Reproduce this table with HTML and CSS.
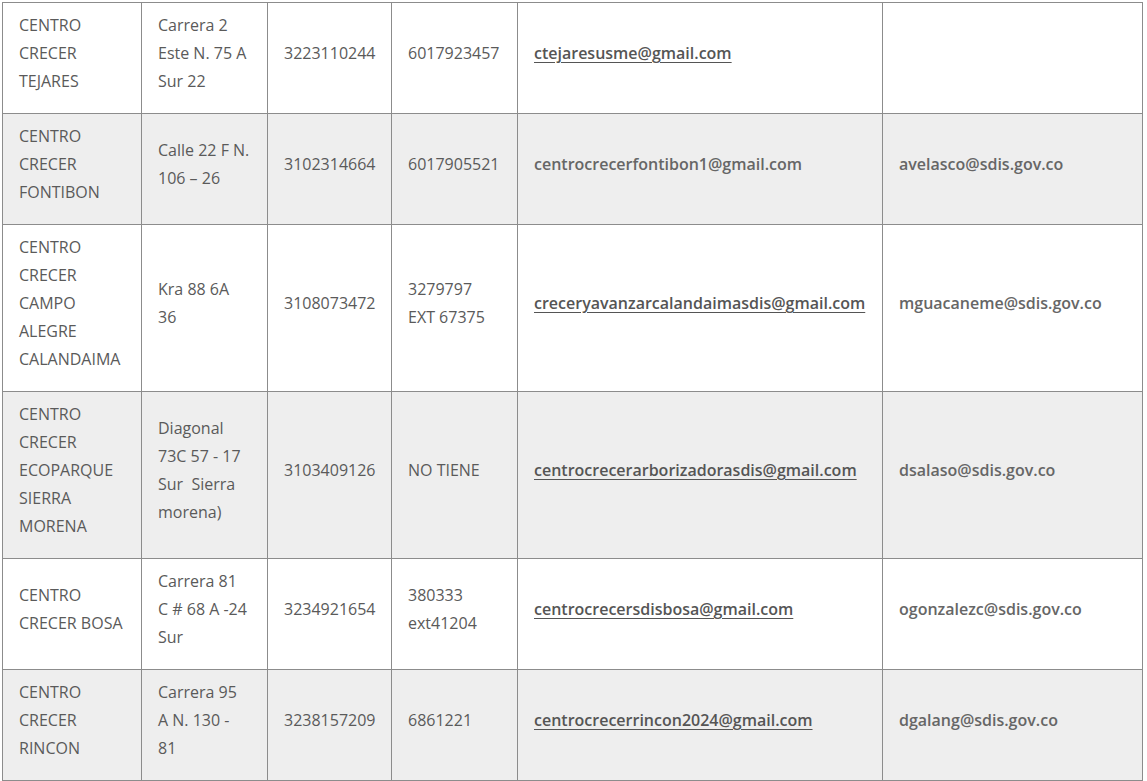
FILE: index.html
```html
<!DOCTYPE html>
<html lang="es">
<head>
<meta charset="utf-8">
<title>Centros Crecer</title>
<link rel="stylesheet" href="styles.css">
</head>
<body>
<div class="wrap">
<table class="centros">
  <colgroup>
    <col class="c-name">
    <col class="c-addr">
    <col class="c-tel">
    <col class="c-fijo">
    <col class="c-mail">
    <col class="c-resp">
  </colgroup>
  <tbody>
    <tr>
      <td>CENTRO CRECER TEJARES</td>
      <td>Carrera 2 Este N. 75 A Sur 22</td>
      <td>3223110244</td>
      <td>6017923457</td>
      <td><a class="mail" href="#">ctejaresusme@gmail.com</a></td>
      <td></td>
    </tr>
    <tr>
      <td>CENTRO CRECER FONTIBON</td>
      <td>Calle 22 F N. 106 – 26</td>
      <td>3102314664</td>
      <td>6017905521</td>
      <td><strong class="plain">centrocrecerfontibon1@gmail.com</strong></td>
      <td><strong class="plain">avelasco@sdis.gov.co</strong></td>
    </tr>
    <tr>
      <td>CENTRO CRECER CAMPO ALEGRE CALANDAIMA</td>
      <td>Kra 88 6A 36</td>
      <td>3108073472</td>
      <td>3279797 EXT 67375</td>
      <td><a class="mail" href="#">creceryavanzarcalandaimasdis@gmail.com</a></td>
      <td><strong class="plain">mguacaneme@sdis.gov.co</strong></td>
    </tr>
    <tr>
      <td>CENTRO CRECER ECOPARQUE SIERRA MORENA</td>
      <td>Diagonal 73C 57 - 17 Sur&nbsp; Sierra morena)</td>
      <td>3103409126</td>
      <td>NO TIENE</td>
      <td><a class="mail" href="#">centrocrecerarborizadorasdis@gmail.com</a></td>
      <td><strong class="plain">dsalaso@sdis.gov.co</strong></td>
    </tr>
    <tr>
      <td>CENTRO CRECER BOSA</td>
      <td>Carrera 81 C # 68 A -24 Sur</td>
      <td>3234921654</td>
      <td>380333 ext41204</td>
      <td><a class="mail" href="#">centrocrecersdisbosa@gmail.com</a></td>
      <td><strong class="plain">ogonzalezc@sdis.gov.co</strong></td>
    </tr>
    <tr>
      <td>CENTRO CRECER RINCON</td>
      <td>Carrera 95 A N. 130 - 81</td>
      <td>3238157209</td>
      <td>6861221</td>
      <td><a class="mail" href="#">centrocrecerrincon2024@gmail.com</a></td>
      <td><strong class="plain">dgalang@sdis.gov.co</strong></td>
    </tr>
  </tbody>
</table>
</div>
</body>
</html>
```

FILE: styles.css
```css
html, body {
  margin: 0;
  padding: 0;
  background: #ffffff;
}

body {
  font-family: "Open Sans", "Liberation Sans", sans-serif;
  font-size: 16px;
  line-height: 28px;
  color: #5a5a5a;
}

.wrap {
  padding: 2px 0 0 2px;
}

.centros {
  border-collapse: collapse;
  table-layout: fixed;
  width: 1140px;
}

.c-name { width: 139px; }
.c-addr { width: 126px; }
.c-tel  { width: 124px; }
.c-fijo { width: 126px; }
.c-mail { width: 365px; }
.c-resp { width: 260px; }

.centros td {
  border: 1px solid #8c8c8c;
  padding: 8px 16px 18px 16px;
  vertical-align: middle;
  text-align: left;
}

.centros tr:nth-child(even) td {
  background: #eeeeee;
}

.mail {
  color: #555555;
  font-weight: 600;
  text-decoration: underline;
  text-underline-offset: 3px;
}

.plain {
  color: #666666;
  font-weight: 600;
}
```
